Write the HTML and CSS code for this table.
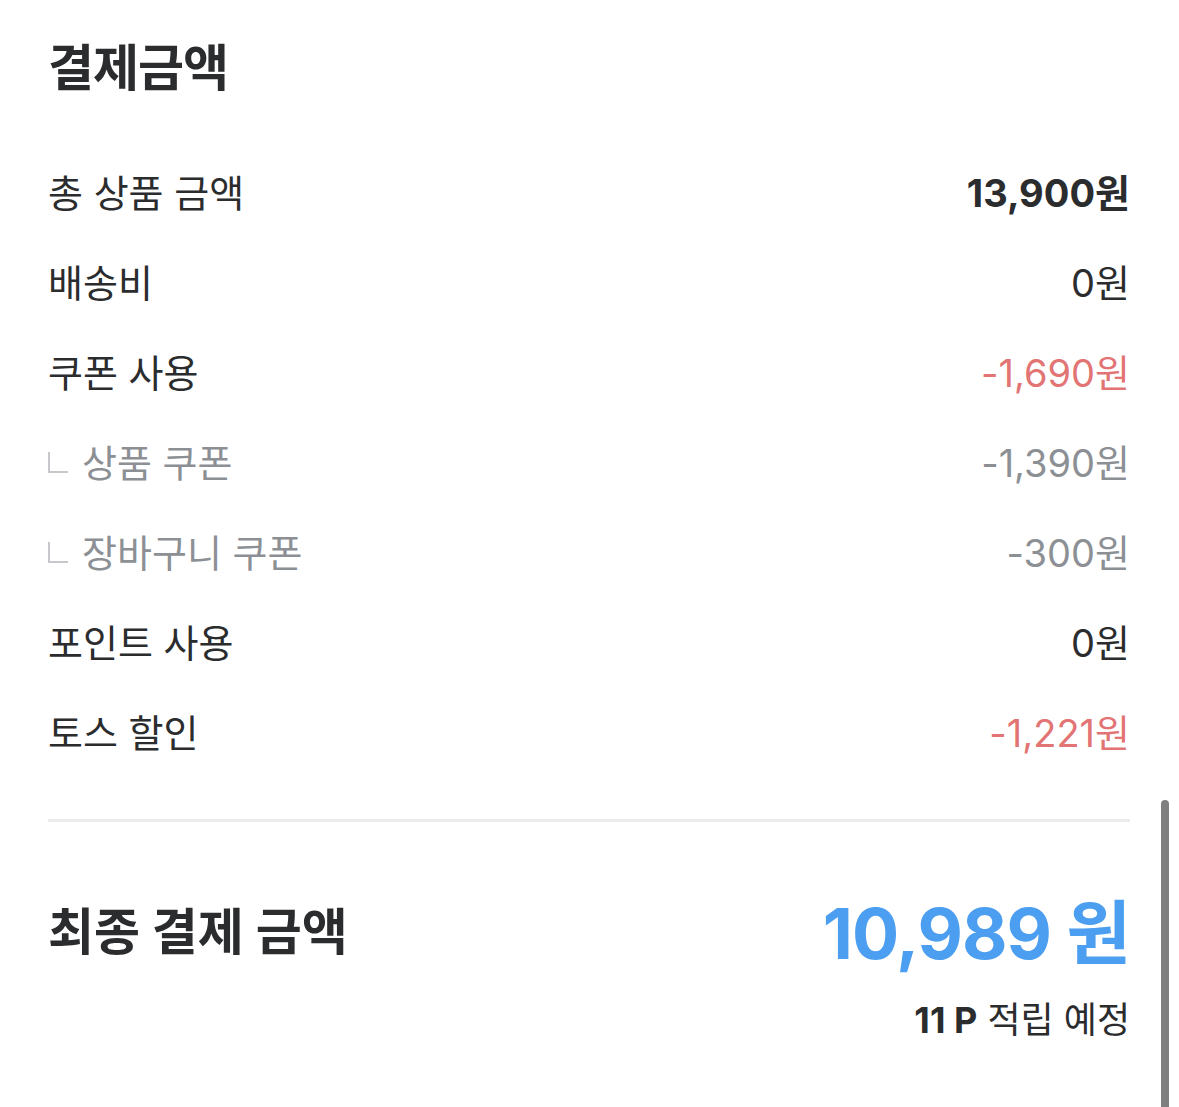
FILE: index.html
```html
<!DOCTYPE html>
<html lang="ko">
<head>
<meta charset="utf-8">
<link rel="stylesheet" href="styles.css">
</head>
<body>
<div class="page">
  <h1 class="title">결제금액</h1>
  <ul class="rows">
    <li class="row"><span class="label">총 상품 금액</span><span class="value strong">13,900원</span></li>
    <li class="row"><span class="label">배송비</span><span class="value">0원</span></li>
    <li class="row"><span class="label">쿠폰 사용</span><span class="value red">-1,690원</span></li>
    <li class="row sub"><span class="label"><span class="mark"></span>상품 쿠폰</span><span class="value">-1,390원</span></li>
    <li class="row sub"><span class="label"><span class="mark"></span>장바구니 쿠폰</span><span class="value">-300원</span></li>
    <li class="row"><span class="label">포인트 사용</span><span class="value">0원</span></li>
    <li class="row"><span class="label">토스 할인</span><span class="value red">-1,221원</span></li>
  </ul>
  <hr class="divider">
  <div class="total">
    <span class="total-label">최종 결제 금액</span>
    <span class="total-value">10,989 원</span>
  </div>
  <div class="points"><b>11 P</b> 적립 예정</div>
</div>
<div class="scrollbar"></div>
</body>
</html>
```
FILE: styles.css
```css
html, body {
  margin: 0;
  padding: 0;
  background: #fff;
}
body {
  font-family: Inter, "Noto Sans CJK KR", sans-serif;
  color: #2b2c2e;
  height: 1107px;
  overflow: hidden;
  position: relative;
}
.page {
  padding: 38px 49px 0 48px;
}
.title {
  margin: 0;
  font-size: 50px;
  line-height: 60px;
  font-weight: 700;
  letter-spacing: -1px;
}
.rows {
  list-style: none;
  margin: 47px 0 0;
  padding: 0;
}
.row {
  display: flex;
  justify-content: space-between;
  align-items: center;
  height: 90px;
  font-size: 38px;
}
.label {
  display: flex;
  align-items: center;
}
.value.strong {
  font-weight: 700;
}
.value.red {
  color: #e27474;
}
.row.sub {
  color: #8c9095;
}
.mark {
  display: block;
  box-sizing: border-box;
  width: 20px;
  height: 21px;
  border-left: 2px solid #c6c8cb;
  border-bottom: 2px solid #c6c8cb;
  margin: 4px 14px 0 0;
}
.divider {
  border: 0;
  height: 3px;
  background: #ececec;
  margin: 44px 0 0;
}
.total {
  display: flex;
  justify-content: space-between;
  align-items: center;
  height: 80px;
  margin-top: 66px;
}
.total-label {
  font-size: 50px;
  font-weight: 700;
}
.total-value {
  font-size: 70px;
  font-weight: 700;
  color: #4b9ef0;
  letter-spacing: -1px;
}
.points {
  text-align: right;
  font-size: 36px;
  line-height: 40px;
  margin-top: 32px;
}
.points b {
  font-weight: 700;
}
.scrollbar {
  position: absolute;
  left: 1161px;
  top: 800px;
  width: 8px;
  height: 320px;
  border-radius: 4px;
  background: #7f7f7f;
}
```
